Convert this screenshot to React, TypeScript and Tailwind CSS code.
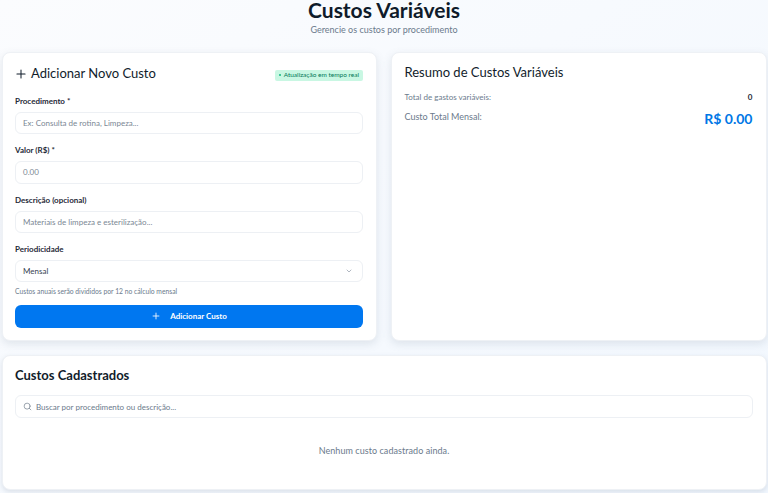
import type { ReactNode } from "react";
import { Plus, ChevronDown, Search } from "lucide-react";

function Field({ label, children }: { label: string; children: ReactNode }) {
  return (
    <div className="flex flex-col">
      <div className="text-[8px] leading-[12px] font-bold text-[#1f2937] mb-[5px]">{label}</div>
      {children}
    </div>
  );
}

function Box({ text }: { text: string }) {
  return (
    <div className="h-[22.33px] rounded-[6px] border border-[#edf0f4] bg-white px-[7px] flex items-center text-[8px] text-[#7b8794]">
      {text}
    </div>
  );
}

export default function App() {
  return (
    <div className="w-[768px] h-[493px] overflow-hidden bg-gradient-to-br from-[#fbfcfe] to-[#f1f7fe] font-['Lato',sans-serif] pl-[1.5px] pr-[1.5px]">
      <header className="h-[52px] flex flex-col items-center">
        <h1 className="text-[21px] leading-[20px] font-bold text-[#0f1b2a]">Custos Variáveis</h1>
        <p className="mt-[4px] text-[9px] leading-[12px] text-[#6b7a8c]">Gerencie os custos por procedimento</p>
      </header>
      <div className="flex gap-[14px] h-[289px]">
        <section className="w-[375px] bg-white rounded-[8px] border border-[#eef1f5] shadow-[0_3px_8px_rgba(100,116,139,0.16)] px-[12.5px] pt-[10px]">
          <div className="flex items-center justify-between h-[22px] mb-[10px]">
            <div className="flex items-center gap-[3px] text-[13px] text-[#111c2b]">
              <Plus size={14} strokeWidth={1.75} className="-ml-px" />
              <span>Adicionar Novo Custo</span>
            </div>
            <span className="flex items-center gap-[3px] h-[11px] mt-[2px] px-[4px] bg-[#c9f7e3] rounded-[2px] text-[6.5px] text-[#047857]">
              <span className="w-[2px] h-[2px] rounded-full bg-[#10b981]" />
              Atualização em tempo real
            </span>
          </div>
          <div className="flex flex-col gap-[10px]">
            <Field label="Procedimento *"><Box text="Ex: Consulta de rotina, Limpeza..." /></Field>
            <Field label="Valor (R$) *"><Box text="0.00" /></Field>
            <Field label="Descrição (opcional)"><Box text="Materiais de limpeza e esterilização..." /></Field>
            <div className="flex flex-col">
              <Field label="Periodicidade">
                <div className="h-[22.33px] rounded-[6px] border border-[#edf0f4] bg-white pl-[7px] pr-[9px] flex items-center justify-between text-[8px] text-[#374151]">
                  Mensal
                  <ChevronDown size={8} className="text-[#8a94a3]" />
                </div>
              </Field>
              <p className="mt-[4px] text-[6.75px] leading-[10px] text-[#6b7a8c]">Custos anuais serão divididos por 12 no cálculo mensal</p>
              <button className="mt-[8.5px] h-[23px] rounded-[6px] bg-[#0077f0] text-white text-[8px] font-bold flex items-center justify-center gap-[9px]">
                <Plus size={10} />
                Adicionar Custo
              </button>
            </div>
          </div>
        </section>
        <section className="flex-1 bg-white rounded-[8px] border border-[#eef1f5] shadow-[0_3px_8px_rgba(100,116,139,0.16)] px-[13px] pt-[9px]">
          <h2 className="text-[13px] leading-[20px] text-[#111c2b]">Resumo de Custos Variáveis</h2>
          <div className="mt-[9px] flex justify-between items-center text-[8px] leading-[12px]">
            <span className="text-[#6b7a8c]">Total de gastos variáveis:</span>
            <span className="font-bold text-[#1f2937]">0</span>
          </div>
          <div className="mt-[8px] flex justify-between items-start">
            <span className="text-[9px] leading-[12px] text-[#6b7a8c]">Custo Total Mensal:</span>
            <span className="-mt-[1px] text-[14px] leading-[18px] font-bold text-[#0077e6]">R$ 0.00</span>
          </div>
        </section>
      </div>
      <section className="mt-[14px] h-[135px] bg-white rounded-[8px] border border-[#eef1f5] shadow-[0_2px_5px_rgba(100,116,139,0.18)] px-[12.5px] pt-[9px]">
        <h2 className="text-[13px] leading-[20px] font-bold text-[#111c2b]">Custos Cadastrados</h2>
        <div className="mt-[10px] h-[23px] rounded-[6px] border border-[#edf0f4] bg-white px-[7px] flex items-center gap-[4px] text-[8px] text-[#6b7a8c]">
          <Search size={9} className="text-[#7b8794]" />
          Buscar por procedimento ou descrição...
        </div>
        <p className="mt-[27px] text-center text-[9px] leading-[12px] tracking-[0.06px] text-[#6b7a8c]">Nenhum custo cadastrado ainda.</p>
      </section>
    </div>
  );
}
